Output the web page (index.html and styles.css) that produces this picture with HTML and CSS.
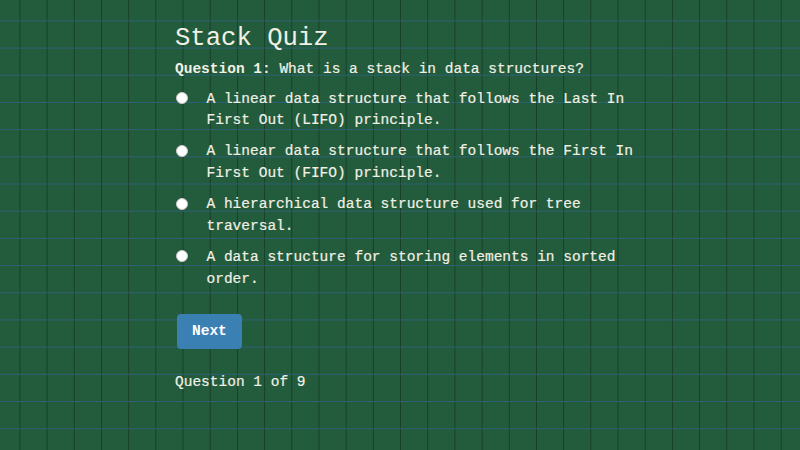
FILE: index.html
```html
<!DOCTYPE html>
<html lang="en">
<head>
<meta charset="utf-8">
<title>Stack Quiz</title>
<link rel="stylesheet" href="styles.css">
</head>
<body>
<main class="quiz">
  <h1 class="quiz-title">Stack Quiz</h1>
  <p class="question"><strong>Question 1:</strong> What is a stack in data structures?</p>
  <ul class="options">
    <li class="option"><input class="radio" type="radio" name="q1" id="a1"><label for="a1">A linear data structure that follows the Last In First Out (LIFO) principle.</label></li>
    <li class="option"><input class="radio" type="radio" name="q1" id="a2"><label for="a2">A linear data structure that follows the First In First Out (FIFO) principle.</label></li>
    <li class="option"><input class="radio" type="radio" name="q1" id="a3"><label for="a3">A hierarchical data structure used for tree traversal.</label></li>
    <li class="option"><input class="radio" type="radio" name="q1" id="a4"><label for="a4">A data structure for storing elements in sorted order.</label></li>
  </ul>
  <button class="next-btn" type="button">Next</button>
  <p class="progress">Question 1 of 9</p>
</main>
</body>
</html>
```
FILE: styles.css
```css
html, body {
  margin: 0;
  padding: 0;
}

body {
  min-height: 450px;
  font-family: "Courier New", "Liberation Mono", monospace;
  font-size: 14.5px;
  color: #f1f0e6;
  background-color: #235c3c;
  background-image:
    linear-gradient(to bottom, transparent 20px, #2c5f76 20px, #2c5f76 21.2px, transparent 21.2px),
    linear-gradient(to right, transparent 19.2px, #173f29 19.2px, #173f29 20.8px, transparent 20.8px);
  background-size: 27.2px 27.2px;
}

.quiz {
  width: 460px;
  margin: 0 0 0 175px;
  padding-top: 22.5px;
}

.quiz-title {
  margin: 0;
  font-size: 25.6px;
  font-weight: normal;
  line-height: 32px;
}

.question {
  margin: 4.5px 0 0;
  line-height: 21.6px;
  -webkit-text-stroke: 0.2px #f1f0e6;
}

.question strong {
  font-weight: bold;
  -webkit-text-stroke: 0;
}

.options {
  list-style: none;
  margin: 8px 0 0;
  padding: 0;
}

.option {
  display: flex;
  align-items: flex-start;
  line-height: 21.6px;
  margin-bottom: 9.6px;
  -webkit-text-stroke: 0.2px #f1f0e6;
}

.radio {
  appearance: none;
  -webkit-appearance: none;
  flex: none;
  width: 12px;
  height: 12px;
  margin: 3.5px 19px 0 0.5px;
  border-radius: 50%;
  background: #ffffff;
  border: 1px solid #c9c9c9;
}

.option label {
  flex: 1;
}

.next-btn {
  display: block;
  margin: 23.5px 0 0 2px;
  padding: 7px 15px;
  font-family: inherit;
  font-size: 14.5px;
  font-weight: bold;
  line-height: 21px;
  color: #ffffff;
  background: #3a80b3;
  border: none;
  border-radius: 4px;
}

.progress {
  margin: 23px 0 0;
  line-height: 21.6px;
  -webkit-text-stroke: 0.2px #f1f0e6;
}
```
